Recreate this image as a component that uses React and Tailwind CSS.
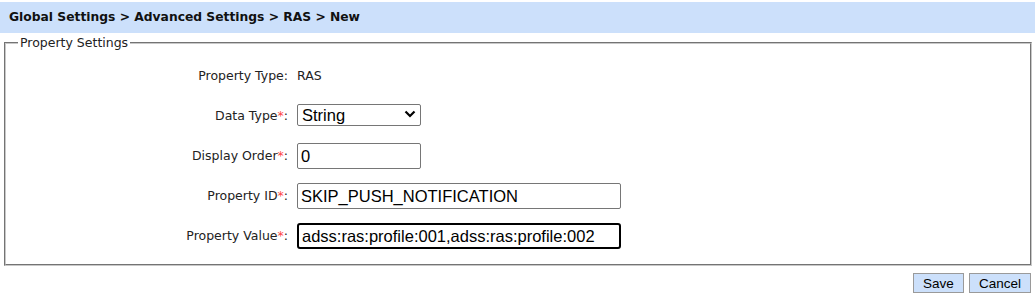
import { useState } from 'react'

const labelFont = "font-['DejaVu_Sans',Tahoma,sans-serif]"

function Label({ text, required }) {
  return (
    <div className={`w-[282px] shrink-0 text-right text-[12.5px] text-[#222] ${labelFont}`}>
      {text}
      {required && <span className="text-[#f44]">*</span>}:
    </div>
  )
}

export default function App() {
  const [dataType, setDataType] = useState('String')
  const [order, setOrder] = useState('0')
  const [propId, setPropId] = useState('SKIP_PUSH_NOTIFICATION')
  const [propValue, setPropValue] = useState('adss:ras:profile:001,adss:ras:profile:002')

  const inputCls =
    "h-[26px] border border-[#767676] rounded-[2px] bg-white px-[3px] text-[16.5px] text-black font-['Liberation_Sans',Arial,sans-serif] outline-none"

  return (
    <div className="w-[1035px] h-[294px] bg-white overflow-hidden">
      <div className="mt-[2px] h-[31px] bg-[#cce0fb] flex items-center pl-[9px]">
        <h1 className={`text-[12.3px] font-bold text-[#111] ${labelFont}`}>
          Global Settings &gt; Advanced Settings &gt; RAS &gt; New
        </h1>
      </div>

      <fieldset className="mt-[3px] ml-[4px] mr-[3px] border-2 [border-style:groove] border-[#c8c8c8] pt-[6px] pb-[8px]">
        <legend className={`ml-[12px] px-[2px] text-[12.5px] leading-[14px] text-[#222] ${labelFont}`}>
          Property Settings
        </legend>

        <div className="flex flex-col">
          <div className="flex items-center gap-[9px] h-[40px]">
            <Label text="Property Type" />
            <span className={`text-[12.5px] text-[#222] ${labelFont}`}>RAS</span>
          </div>

          <div className="flex items-center gap-[9px] h-[40px]">
            <Label text="Data Type" required />
            <div className="relative w-[124px] h-[22px] mb-[4px]">
              <select
                value={dataType}
                onChange={e => setDataType(e.target.value)}
                className="appearance-none w-full h-full border border-[#767676] rounded-[2px] bg-white pl-[4px] text-[16.5px] leading-[20px] text-black font-['Liberation_Sans',Arial,sans-serif] outline-none"
              >
                <option>String</option>
                <option>Integer</option>
                <option>Boolean</option>
              </select>
              <svg className="pointer-events-none absolute right-[5px] top-[7px]" width="12" height="8" viewBox="0 0 12 8">
                <path d="M1.5 1.5 L6 6 L10.5 1.5" fill="none" stroke="#000" strokeWidth="2.2" />
              </svg>
            </div>
          </div>

          <div className="flex items-center gap-[9px] h-[40px]">
            <Label text="Display Order" required />
            <input value={order} onChange={e => setOrder(e.target.value)} className={`${inputCls} w-[124px]`} />
          </div>

          <div className="flex items-center gap-[9px] h-[40px]">
            <Label text="Property ID" required />
            <input value={propId} onChange={e => setPropId(e.target.value)} className={`${inputCls} w-[324px]`} />
          </div>

          <div className="flex items-center gap-[9px] h-[40px]">
            <Label text="Property Value" required />
            <input
              value={propValue}
              onChange={e => setPropValue(e.target.value)}
              className={`${inputCls} w-[324px] border-2 border-black rounded-[3px] px-[2px]`}
            />
          </div>
        </div>
      </fieldset>

      <div className="flex justify-end gap-[5px] mt-[7px] mr-[4px]">
        <button className="w-[51px] h-[20px] bg-[#cce0fb] border border-[#9a9a9a] text-[13.5px] text-black font-['Liberation_Sans',Arial,sans-serif]">
          Save
        </button>
        <button className="w-[62px] h-[20px] bg-[#cce0fb] border border-[#9a9a9a] text-[13.5px] text-black font-['Liberation_Sans',Arial,sans-serif]">
          Cancel
        </button>
      </div>
    </div>
  )
}
